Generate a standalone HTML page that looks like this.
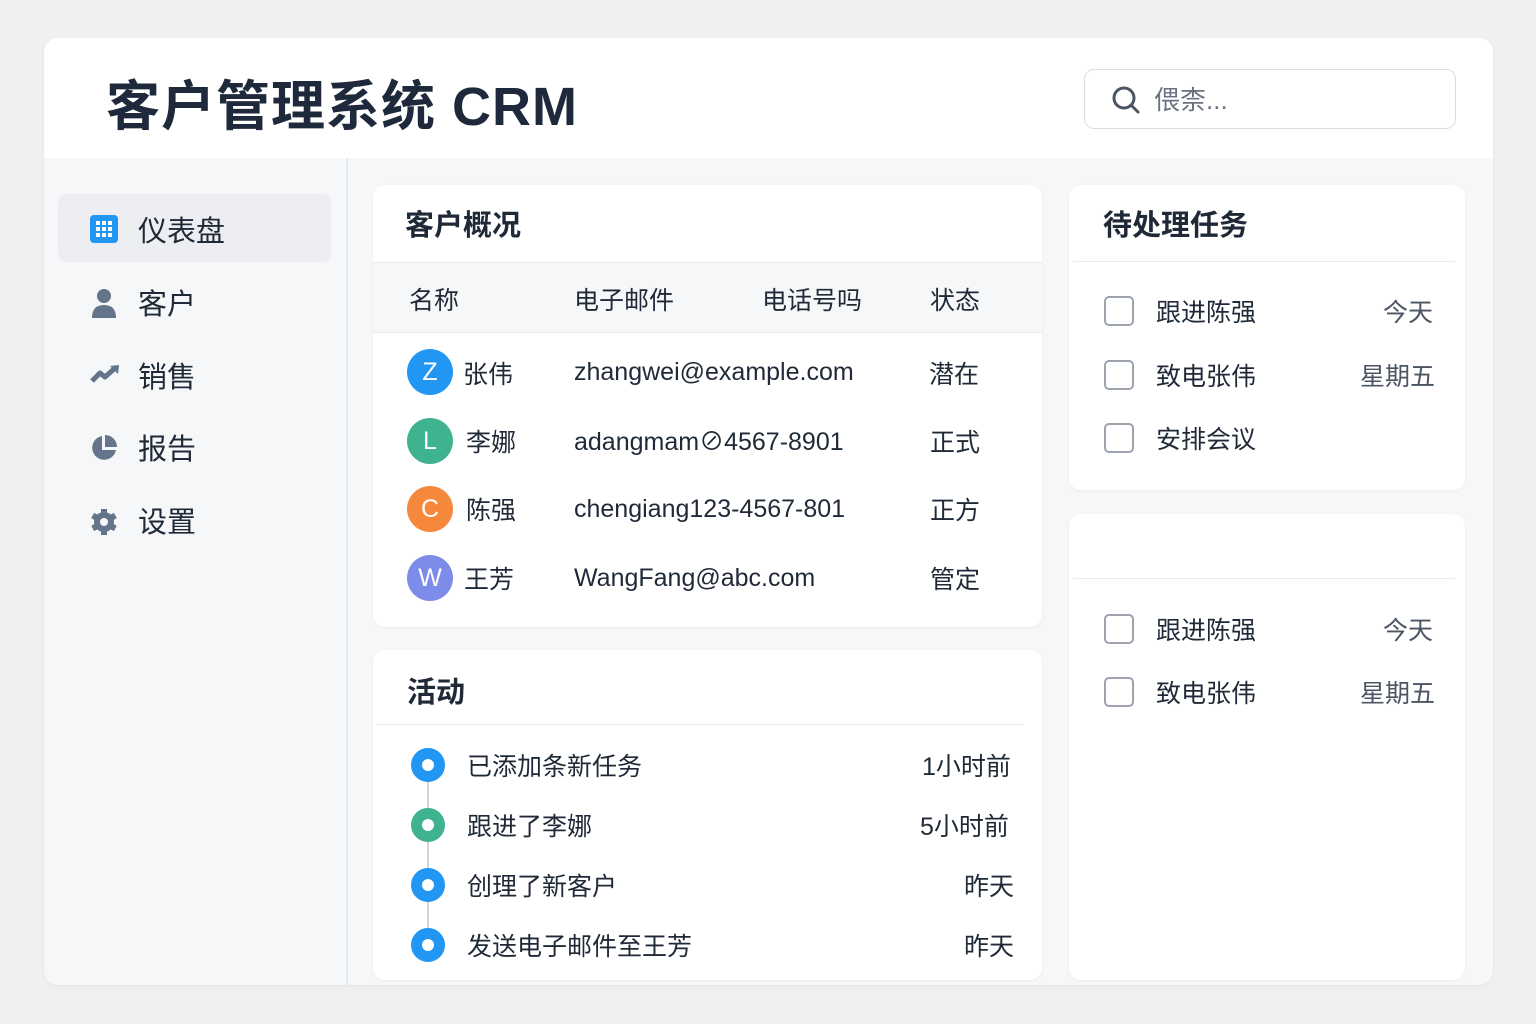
<!DOCTYPE html>
<html><head><meta charset="utf-8"><style>
*{margin:0;padding:0;box-sizing:border-box}
body{width:1536px;height:1024px;background:#eef0f2;font-family:"Liberation Sans","Noto Sans CJK SC",sans-serif;color:#1f2937;position:relative;overflow:hidden}
.a{position:absolute}
.main{left:44px;top:38px;width:1449px;height:947px;background:#f5f7f9;border-radius:14px;overflow:hidden;box-shadow:0 1px 3px rgba(0,0,0,.06)}
.hdr{left:0;top:0;width:1449px;height:120px;background:#fff}
.card{background:#fff;border-radius:12px;box-shadow:0 1px 3px rgba(0,0,0,.05)}
.nav{font-size:29px;color:#1f2937;margin-top:-2px}
.t{font-size:25px;color:#1f2937;white-space:nowrap;margin-top:-3px}
.e{margin-top:0}
.av{width:46px;height:46px;border-radius:50%;color:#fff;font-size:25px;text-align:center;line-height:46px}
.cb{width:30px;height:30px;border:2px solid #9ca3af;border-radius:5px;background:#fff}
.dot{width:34px;height:34px;border-radius:50%;border:11px solid #2196f3;background:#fff}
.g{color:#4b5563}
</style></head><body>
<div class="a main">
 <div class="a hdr"></div>
 <div class="a" style="left:62px;top:24px;font-size:54px;font-weight:bold;color:#1e293b;letter-spacing:1px">客户管理系统 CRM</div>
 <div class="a" style="left:1040px;top:31px;width:372px;height:60px;border:1.5px solid #d9dde2;border-radius:10px;background:#fff"></div>
 <svg class="a" style="left:1066px;top:46px" width="32" height="32" viewBox="0 0 32 32"><circle cx="14" cy="14" r="10" fill="none" stroke="#4b5563" stroke-width="3"/><line x1="21" y1="21" x2="28" y2="28" stroke="#4b5563" stroke-width="3" stroke-linecap="round"/></svg>
 <div class="a" style="left:1110px;top:42px;font-size:26px;color:#6b7280">偎柰...</div>
 <div class="a" style="left:302px;top:120px;width:2px;height:827px;background:#e6e9ed"></div>
 <div class="a" style="left:14px;top:156px;width:273px;height:68px;background:#eceef1;border-radius:8px"></div>
 <svg class="a" style="left:46px;top:177px" width="28" height="28" viewBox="0 0 28 28"><rect width="28" height="28" rx="4" fill="#2196f3"/><g fill="#fff"><rect x="6" y="6" width="4" height="4"/><rect x="12" y="6" width="4" height="4"/><rect x="18" y="6" width="4" height="4"/><rect x="6" y="12" width="4" height="4"/><rect x="12" y="12" width="4" height="4"/><rect x="18" y="12" width="4" height="4"/><rect x="6" y="18" width="4" height="4"/><rect x="12" y="18" width="4" height="4"/><rect x="18" y="18" width="4" height="4"/></g></svg>
 <div class="a nav" style="left:94px;top:172px">仪表盘</div>
 <svg class="a" style="left:46px;top:250px" width="28" height="30" viewBox="0 0 28 30"><circle cx="14" cy="8" r="7" fill="#64748b"/><path d="M2 30 Q2 17 14 17 Q26 17 26 30Z" fill="#64748b"/></svg>
 <div class="a nav" style="left:94px;top:245px">客户</div>
 <svg class="a" style="left:46px;top:326px" width="30" height="20" viewBox="0 0 30 20"><path d="M2 17 L10 9 L15 13 L24 5" fill="none" stroke="#64748b" stroke-width="5" stroke-linejoin="round"/><path d="M20 2 L29 1 L28 10Z" fill="#64748b"/></svg>
 <div class="a nav" style="left:94px;top:318px">销售</div>
 <svg class="a" style="left:46px;top:396px" width="28" height="28" viewBox="0 0 28 28"><path d="M12 2 A12 12 0 1 0 26 16 L12 16Z" fill="#64748b"/><path d="M15 1 A12 12 0 0 1 27 13 L15 13Z" fill="#64748b"/></svg>
 <div class="a nav" style="left:94px;top:390px">报告</div>
 <svg class="a" style="left:46px;top:470px" width="28" height="28" viewBox="0 0 28 28"><g fill="#64748b"><circle cx="14" cy="14" r="10"/><g stroke="#64748b" stroke-width="6"><line x1="14" y1="1" x2="14" y2="27"/><line x1="2.7" y1="7.5" x2="25.3" y2="20.5"/><line x1="2.7" y1="20.5" x2="25.3" y2="7.5"/></g></g><circle cx="14" cy="14" r="4" fill="#f5f7f9"/></svg>
 <div class="a nav" style="left:94px;top:463px">设置</div>
</div>

<!-- overview -->
<div class="a card" style="left:373px;top:185px;width:669px;height:442px"></div>
<div class="a" style="left:373px;top:262px;width:669px;height:71px;background:#f6f7f9;border-top:1px solid #e8ebee;border-bottom:1px solid #e8ebee"></div>
<div class="a t" style="left:405px;top:205px;font-size:29px;font-weight:bold">客户概况</div>
<div class="a t" style="left:409px;top:284px">名称</div>
<div class="a t" style="left:574px;top:284px">电子邮件</div>
<div class="a t" style="left:762px;top:284px">电话号吗</div>
<div class="a t" style="left:930px;top:284px">状态</div>
<div class="a av" style="left:407px;top:349px;background:#2196f3">Z</div>
<div class="a t" style="left:463px;top:358px">张伟</div>
<div class="a t e" style="left:574px;top:358px">zhangwei@example.com</div>
<div class="a t" style="left:929px;top:358px">潜在</div>
<div class="a av" style="left:407px;top:418px;background:#3fb28f">L</div>
<div class="a t" style="left:466px;top:426px">李娜</div>
<div class="a t e" style="left:574px;top:422px">adangmam⊘4567-8901</div>
<div class="a t" style="left:930px;top:426px">正式</div>
<div class="a av" style="left:407px;top:486px;background:#f5883a">C</div>
<div class="a t" style="left:466px;top:494px">陈强</div>
<div class="a t e" style="left:574px;top:495px">chengiang123-4567-801</div>
<div class="a t" style="left:930px;top:494px">正方</div>
<div class="a av" style="left:407px;top:555px;background:#7c8ce8">W</div>
<div class="a t" style="left:464px;top:563px">王芳</div>
<div class="a t e" style="left:574px;top:564px">WangFang@abc.com</div>
<div class="a t" style="left:930px;top:563px">管定</div>

<!-- activity -->
<div class="a card" style="left:373px;top:650px;width:669px;height:330px"></div>
<div class="a t" style="left:407px;top:672px;font-size:29px;font-weight:bold">活动</div>
<div class="a" style="left:377px;top:724px;width:647px;height:1px;background:#e8ebee"></div>
<div class="a" style="left:427px;top:780px;width:2px;height:150px;background:#d1d5db"></div>
<div class="a dot" style="left:411px;top:748px"></div>
<div class="a dot" style="left:411px;top:808px;border-color:#3fb28f"></div>
<div class="a dot" style="left:411px;top:868px"></div>
<div class="a dot" style="left:411px;top:928px"></div>
<div class="a t" style="left:467px;top:750px">已添加条新任务</div>
<div class="a t" style="left:467px;top:810px">跟进了李娜</div>
<div class="a t" style="left:467px;top:870px">创理了新客户</div>
<div class="a t" style="left:467px;top:930px">发送电子邮件至王芳</div>
<div class="a t" style="left:922px;top:750px">1小时前</div>
<div class="a t" style="left:920px;top:810px">5小时前</div>
<div class="a t" style="left:964px;top:870px">昨天</div>
<div class="a t" style="left:964px;top:930px">昨天</div>

<!-- tasks -->
<div class="a card" style="left:1069px;top:185px;width:396px;height:305px"></div>
<div class="a t" style="left:1103px;top:205px;font-size:29px;font-weight:bold">待处理任务</div>
<div class="a" style="left:1073px;top:261px;width:382px;height:1px;background:#e8ebee"></div>
<div class="a cb" style="left:1104px;top:296px"></div><div class="a t" style="left:1156px;top:296px">跟进陈强</div><div class="a t g" style="left:1383px;top:296px">今天</div>
<div class="a cb" style="left:1104px;top:360px"></div><div class="a t" style="left:1156px;top:360px">致电张伟</div><div class="a t g" style="left:1360px;top:360px">星期五</div>
<div class="a cb" style="left:1104px;top:423px"></div><div class="a t" style="left:1156px;top:423px">安排会议</div>

<div class="a card" style="left:1069px;top:514px;width:396px;height:466px"></div>
<div class="a" style="left:1073px;top:578px;width:382px;height:1px;background:#e8ebee"></div>
<div class="a cb" style="left:1104px;top:614px"></div><div class="a t" style="left:1156px;top:614px">跟进陈强</div><div class="a t g" style="left:1383px;top:614px">今天</div>
<div class="a cb" style="left:1104px;top:677px"></div><div class="a t" style="left:1156px;top:677px">致电张伟</div><div class="a t g" style="left:1360px;top:677px">星期五</div>
</body></html>
